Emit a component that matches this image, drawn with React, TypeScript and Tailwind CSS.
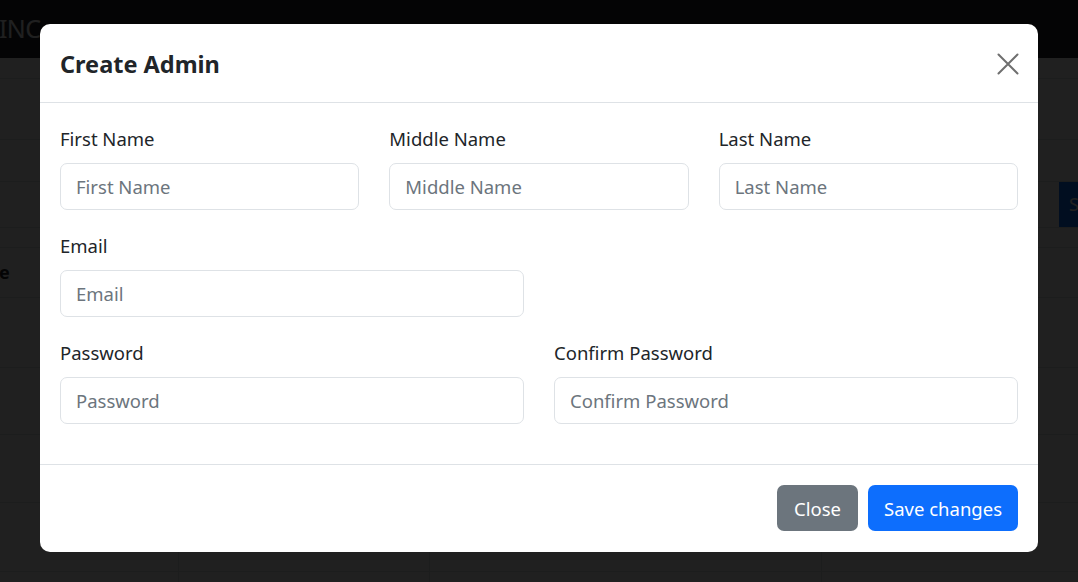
import React from "react";

const font = { fontFamily: '"Noto Sans", "Open Sans", sans-serif' };

function Field({ label }: { label: string }) {
  return (
    <div className="flex flex-col">
      <label className="text-[18.5px] leading-[29px] h-[29px] mb-[10px] text-[#212529]">
        {label}
      </label>
      <input
        type="text"
        placeholder={label}
        className="h-[47px] w-full rounded-[7px] border border-[#dee2e6] bg-white px-[15px] text-[18.5px] text-[#212529] placeholder:text-[#6c757d] outline-none"
      />
    </div>
  );
}

function BackgroundPage() {
  return (
    <div className="min-h-[582px] bg-white" style={font}>
      <div className="h-[58px] bg-[#212529] flex items-center">
        <span className="text-[25px] text-white -ml-[1px] tracking-tight">INC</span>
      </div>
      <div className="h-[21px] border-b border-[#dee2e6]" />
      <div className="h-[61px] border-b border-[#dee2e6]" />
      <div className="h-[42px] border-b border-[#dee2e6]" />
      <div className="h-[46px] border-b border-[#dee2e6] flex justify-end">
        <div className="h-full w-[19px] bg-[#0d6efd] text-white text-[18px] flex items-center pl-[10px] overflow-hidden">
          S
        </div>
      </div>
      <div className="h-[20px] border-b border-[#dee2e6]" />
      <div className="h-[50px] border-b border-[#dee2e6] flex items-center">
        <span className="font-bold text-[18px] text-[#212529] -ml-[1px]">e</span>
      </div>
      <div className="h-[70px] border-b border-[#dee2e6]" />
      <div className="h-[67px] border-b border-[#dee2e6]" />
      <div className="h-[68px] border-b border-[#dee2e6] grid grid-cols-[179px_251px_392px_1fr]">
        <div className="border-r border-[#dee2e6]" />
        <div className="border-r border-[#dee2e6]" />
        <div className="border-r border-[#dee2e6]" />
        <div />
      </div>
      <div className="h-[69px] border-b border-[#dee2e6] grid grid-cols-[179px_251px_392px_1fr]">
        <div className="border-r border-[#dee2e6]" />
        <div className="border-r border-[#dee2e6]" />
        <div className="border-r border-[#dee2e6]" />
        <div />
      </div>
      <div className="h-[40px] grid grid-cols-[179px_251px_392px_1fr]">
        <div className="border-r border-[#dee2e6]" />
        <div className="border-r border-[#dee2e6]" />
        <div className="border-r border-[#dee2e6]" />
        <div />
      </div>
    </div>
  );
}

export default function App() {
  return (
    <div className="relative w-[1078px] h-[582px] overflow-hidden">
      <BackgroundPage />

      <div className="fixed inset-0 bg-[rgba(0,0,0,0.875)]">
        <div
          className="mt-[24px] ml-[40px] w-[998px] rounded-[10px] bg-white"
          style={font}
        >
          {/* header */}
          <div className="h-[79px] border-b border-[#dee2e6] px-5 flex items-center justify-between">
            <h5 className="text-[23.5px] font-bold text-[#212529] leading-none pt-[3px]">
              Create Admin
            </h5>
            <button className="w-[22px] h-[22px] mr-[-1px] mt-[1px] cursor-pointer">
              <svg viewBox="0 0 22 22" width="22" height="22">
                <path
                  d="M1.5 1.5L20.5 20.5M20.5 1.5L1.5 20.5"
                  stroke="#6f6f6f"
                  strokeWidth="2"
                  strokeLinecap="round"
                  fill="none"
                />
              </svg>
            </button>
          </div>

          {/* body */}
          <div className="px-5 pt-[21px] pb-[40px] flex flex-col gap-y-[21px]">
            <div className="grid grid-cols-3 gap-x-[30px]">
              <Field label="First Name" />
              <Field label="Middle Name" />
              <Field label="Last Name" />
            </div>
            <div className="grid grid-cols-2 gap-x-[30px]">
              <Field label="Email" />
            </div>
            <div className="grid grid-cols-2 gap-x-[30px]">
              <Field label="Password" />
              <Field label="Confirm Password" />
            </div>
          </div>

          {/* footer */}
          <div className="border-t border-[#dee2e6] px-5 pt-[20px] pb-[21px] flex justify-end gap-[10px]">
            <button className="h-[46px] px-[17px] rounded-[7px] bg-[#6c757d] text-white text-[18.5px] pt-[1px]">
              Close
            </button>
            <button className="h-[46px] px-[16px] rounded-[7px] bg-[#0d6efd] text-white text-[18.5px] pt-[1px]">
              Save changes
            </button>
          </div>
        </div>
      </div>
    </div>
  );
}
